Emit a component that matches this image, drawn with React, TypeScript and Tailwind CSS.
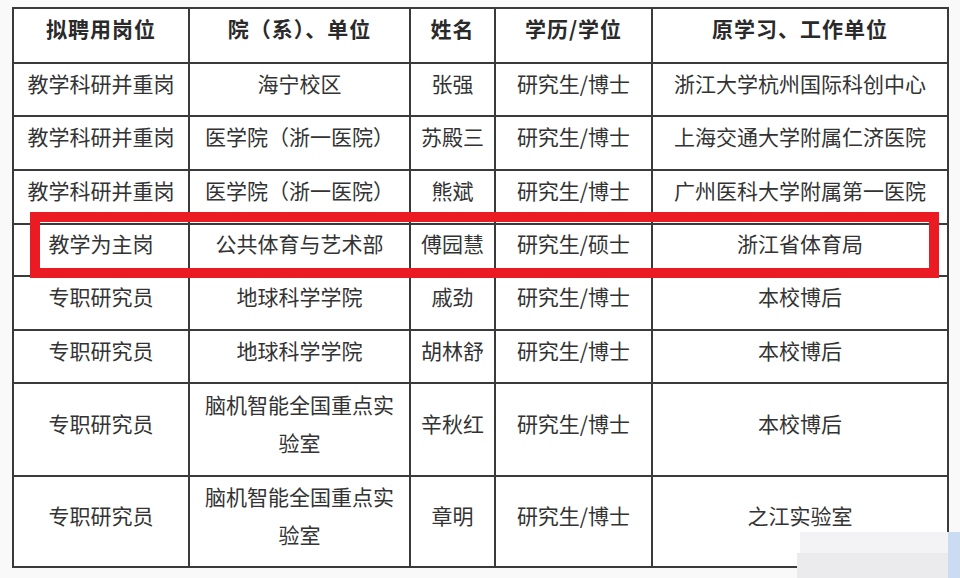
import React from 'react';

interface Row {
  post: string;
  dept: string;
  name: string;
  degree: string;
  origin: string;
}

const rows: Row[] = [
  { post: '教学科研并重岗', dept: '海宁校区', name: '张强', degree: '研究生/博士', origin: '浙江大学杭州国际科创中心' },
  { post: '教学科研并重岗', dept: '医学院（浙一医院）', name: '苏殿三', degree: '研究生/博士', origin: '上海交通大学附属仁济医院' },
  { post: '教学科研并重岗', dept: '医学院（浙一医院）', name: '熊斌', degree: '研究生/博士', origin: '广州医科大学附属第一医院' },
  { post: '教学为主岗', dept: '公共体育与艺术部', name: '傅园慧', degree: '研究生/硕士', origin: '浙江省体育局' },
  { post: '专职研究员', dept: '地球科学学院', name: '戚劲', degree: '研究生/博士', origin: '本校博后' },
  { post: '专职研究员', dept: '地球科学学院', name: '胡林舒', degree: '研究生/博士', origin: '本校博后' },
  { post: '专职研究员', dept: '脑机智能全国重点实验室', name: '辛秋红', degree: '研究生/博士', origin: '本校博后' },
  { post: '专职研究员', dept: '脑机智能全国重点实验室', name: '章明', degree: '研究生/博士', origin: '之江实验室' },
];

const headers = ['拟聘用岗位', '院（系）、单位', '姓名', '学历/学位', '原学习、工作单位'];

export default function App() {
  return (
    <div
      className="relative w-[960px] h-[578px] overflow-hidden bg-[#f9f9fa] pl-[12px] pt-[7px]"
      style={{ fontFamily: '"Noto Sans CJK SC", "Noto Sans", sans-serif' }}
    >
      <div className="grid w-[937px] grid-cols-[176px_221px_85px_157px_296px] grid-rows-[55px_53px_54px_54px_52px_54px_53px_93px_91px] border-t-2 border-l-2 border-[#3a3a3a] bg-white text-[21px] text-[#333333]">
        {headers.map((t, i) => (
          <div
            key={i}
            className="flex items-center justify-center border-r-2 border-b-2 border-[#3a3a3a] pb-4 font-bold leading-[28px] text-[#2a2a2a] tracking-[1px]"
          >
            {t}
          </div>
        ))}
        {rows.map((r, i) =>
          [r.post, r.dept, r.name, r.degree, r.origin].map((v, j) => (
            <div
              key={`${i}-${j}`}
              className={`flex items-center justify-center border-r-2 border-b-2 border-[#3a3a3a] pb-[14px] text-center leading-[38px] ${j === 1 ? 'px-3' : 'px-0'}`}
            >
              {v}
            </div>
          ))
        )}
      </div>

      {/* red highlight box */}
      <div className="absolute left-[30px] top-[212px] w-[909px] h-[66px] border-[10px] border-[#ea1b22]" />

      {/* screenshot edge artefacts, bottom right */}
      <div className="absolute left-[800px] top-[532px] w-[148px] h-[21px] bg-[#f3f3f5]" />
      <div className="absolute left-[797px] top-[553px] w-[151px] h-[25px] bg-[#ebebed]" />
      <div className="absolute left-[948px] top-[532px] w-[12px] h-[46px] bg-[#c9dcf1]" />
    </div>
  );
}
